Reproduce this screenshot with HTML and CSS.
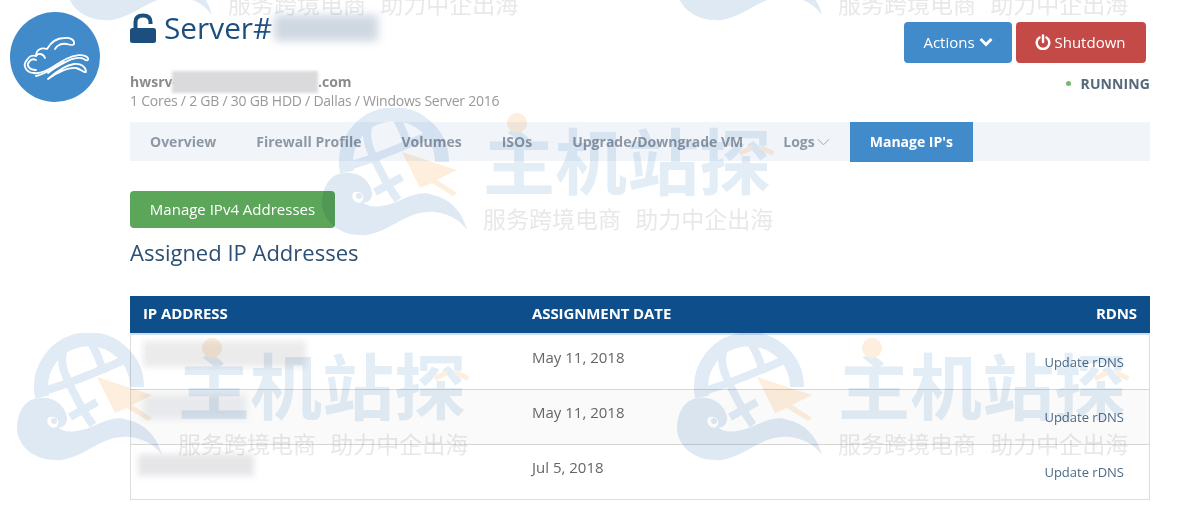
FILE: index.html
```html
<!DOCTYPE html>
<html lang="en">
<head>
<meta charset="utf-8">
<title>Server</title>
<link rel="stylesheet" href="styles.css">
</head>
<body>
<svg class="defs" width="0" height="0" aria-hidden="true">
  <symbol id="wm-mark" viewBox="0 0 160 130">
    <path fill="none" stroke="#e0ebf5" stroke-width="14" d="M27 64 A48 48 0 1 1 122 54"/>
    <g fill="none" stroke="#e0ebf5" stroke-width="8">
      <path d="M50 14 C42 30 52 46 60 62 C66 74 72 84 78 92"/>
      <path d="M76 10 C82 20 86 30 88 40"/>
      <path d="M28 58 C52 52 80 40 116 24"/>
      <path d="M55 84 L82 69"/>
    </g>
    <path fill="#dfe9f4" d="M2 94 C3 76 12 65 25 65 C38 63 50 72 52 84 C53 92 46 96 43 94 C48 100 62 101 83 91 C96 85 106 84 113 87 C128 90 142 102 147 122 C138 110 128 106 115 104 C96 102 82 112 67 120 C54 126 46 128 40 127 C20 127 2 114 2 94 Z"/>
    <path fill="#fff" d="M33 85 C37 82 45 85 43 91 C42 96 36 96 33 91 C32 89 32 87 33 85 Z"/>
    <circle cx="39" cy="88" r="3" fill="#dfe9f4"/>
    <path fill="#fdeedd" d="M82 44 L137 62 L117 72 L137 85 L133 88 L112 75 L100 80 Z"/>
  </symbol>
</svg>

<div class="wm wm-tl"><svg class="wm-svg"><use href="#wm-mark"/></svg><div class="wm-copy"><i class="wm-dot"></i><div class="wm-big">主机站探</div><div class="wm-sub">服务跨境电商 助力中企出海</div></div></div>
<div class="wm wm-tr"><svg class="wm-svg"><use href="#wm-mark"/></svg><div class="wm-copy"><i class="wm-dot"></i><div class="wm-big">主机站探</div><div class="wm-sub">服务跨境电商 助力中企出海</div></div></div>
<div class="wm wm-c"><svg class="wm-svg"><use href="#wm-mark"/></svg><div class="wm-copy"><i class="wm-dot"></i><div class="wm-big">主机站探</div><div class="wm-sub">服务跨境电商 助力中企出海</div></div></div>
<div class="wm wm-bl"><svg class="wm-svg"><use href="#wm-mark"/></svg><div class="wm-copy"><i class="wm-dot"></i><div class="wm-big">主机站探</div><div class="wm-sub">服务跨境电商 助力中企出海</div></div></div>
<div class="wm wm-br"><svg class="wm-svg"><use href="#wm-mark"/></svg><div class="wm-copy"><i class="wm-dot"></i><div class="wm-big">主机站探</div><div class="wm-sub">服务跨境电商 助力中企出海</div></div></div>

<div class="page">
  <aside class="side">
    <div class="logo">
      <svg viewBox="0 0 90 90" width="90" height="90" fill="none" stroke="#fff" stroke-width="1.800" stroke-linecap="round" stroke-linejoin="round">
        <path d="M24 61 C16 61 12 53 17 48 C19 44 23 43 26 44 C26 38 31 35 37 37 C41 30 47 26 54 26 C60 25 65 28 64 32 C63 34 60 33 57 32 C52 31 47 33 45 37"/>
        <path d="M26 44 C28 41 33 41 35 46"/>
        <path d="M26 58 C19 58 16 53 19 50 C21 47 24 47 26 48"/>
        <path d="M24 61 C34 63 46 52 56 47 C64 43 74 41 78 46 C79 49 76 49 74 47 C68 44 60 47 52 52 C46 55 42 58 38 61"/>
        <path d="M26 64 C36 62 46 54 54 50"/>
        <path d="M38 67 C46 60 56 53 64 52 C71 51 76 55 76 60 C74 61 71 57 66 56 C58 55 48 60 38 67 Z"/>
      </svg>
    </div>
  </aside>

  <main class="main">
    <header class="head">
      <div class="head-left">
        <h1 class="title">
          <svg class="lock" viewBox="0 0 26 30" width="26" height="30">
            <path fill="none" stroke="#1d4f7e" stroke-width="4" d="M5.500 16 V9 C5.500 4.500 8.500 2.500 13 2.500 C17.500 2.500 20.500 4.500 20.500 9 V11"/>
            <rect x="0" y="15" width="26" height="15" rx="2.500" fill="#1d4f7e"/>
          </svg>
          <span>Server#</span><span class="blur blur-title"></span>
        </h1>
        <div class="host">hwsrv-<span class="blur blur-host"></span>.com</div>
        <div class="specs">1 Cores / 2 GB / 30 GB HDD / Dallas / Windows Server 2016</div>
      </div>
      <div class="head-right">
        <div class="btns">
          <a class="btn btn-blue">Actions
            <svg viewBox="0 0 14 10" width="14" height="10" fill="none" stroke="#fff" stroke-width="2.800"><path d="M1.500 2 L7 7.500 L12.500 2"/></svg>
          </a>
          <a class="btn btn-red">
            <svg viewBox="0 0 16 16" width="16" height="16" fill="none" stroke="#fff" stroke-width="2.400" stroke-linecap="round"><path d="M4.500 3.500 A6.300 6.300 0 1 0 11.500 3.500"/><path d="M8 1.500 V8"/></svg>
            Shutdown
          </a>
        </div>
        <div class="status"><i class="status-dot"></i>RUNNING</div>
      </div>
    </header>

    <nav class="tabs">
      <a class="tab">Overview</a>
      <a class="tab">Firewall Profile</a>
      <a class="tab">Volumes</a>
      <a class="tab">ISOs</a>
      <a class="tab">Upgrade/Downgrade VM</a>
      <a class="tab">Logs
        <svg viewBox="0 0 14 8" width="13" height="8" fill="none" stroke="#9aa4b0" stroke-width="1"><path d="M1 1 L7 7 L13 1"/></svg>
      </a>
      <a class="tab tab-on">Manage IP's</a>
    </nav>

    <a class="btn-green">Manage IPv4 Addresses</a>
    <h2 class="subhead">Assigned IP Addresses</h2>

    <table class="ips">
      <thead>
        <tr><th>IP ADDRESS</th><th>ASSIGNMENT DATE</th><th class="r">RDNS</th></tr>
      </thead>
      <tbody>
        <tr><td><span class="blur blur-a"></span></td><td>May 11, 2018</td><td class="r"><a class="upd">Update rDNS</a></td></tr>
        <tr class="alt"><td><span class="blur blur-b"></span></td><td>May 11, 2018</td><td class="r"><a class="upd">Update rDNS</a></td></tr>
        <tr><td><span class="blur blur-c"></span></td><td>Jul 5, 2018</td><td class="r"><a class="upd">Update rDNS</a></td></tr>
      </tbody>
    </table>
  </main>
</div>
</body>
</html>
```

FILE: styles.css
```css
* { box-sizing: border-box; }
html, body { margin: 0; height: 508px; overflow: hidden; background: #fff; }
body { font-family: "Open Sans", "Liberation Sans", sans-serif; color: #666; position: relative; }
.defs { position: absolute; }

.page { display: flex; padding-right: 29px; }
.side { width: 130px; flex: none; padding: 12px 0 0 10px; }
.logo { width: 90px; height: 90px; border-radius: 50%; background: #428bca; }
.logo svg { display: block; }
.main { flex: 1; min-width: 0; }

.head { display: flex; justify-content: space-between; height: 122px; }
.head-left { padding-top: 8px; }
.title { display: flex; align-items: center; margin: 0; height: 40px; font-size: 29.800px; font-weight: 400; color: #1d4f7e; line-height: 40px; }
.lock { margin-right: 8px; flex: none; }
.host { margin-top: 24px; font-size: 14px; font-weight: 700; line-height: 20px; height: 20px; color: #8b8b8b; display: flex; align-items: center; }
.specs { font-size: 14px; line-height: 20px; color: #999; margin-top: -1px; letter-spacing: -.24px; }

.blur { display: block; background: #d4d6da; filter: blur(3px); }
.blur-title { width: 104px; height: 26px; margin-left: 2px; background: #cfd7e1; filter: blur(5px); }
.blur-host { width: 146px; height: 22px; margin-left: -5px; background: #dadadd; filter: blur(1.500px); }
.blur-a { width: 163px; height: 26px; background: #ebebec; }
.blur-b { width: 103px; height: 24px; margin-top: -1px; background: #e7e9ec; }
.blur-c { width: 116px; height: 22px; background: #e6e6e8; margin: 3px 0 0 -5px; }

.head-right { display: flex; flex-direction: column; align-items: flex-end; padding-top: 22px; }
.btns { display: flex; gap: 4px; margin-right: 4px; }
.btn { display: flex; align-items: center; justify-content: center; height: 41px; padding-bottom: 2px; border-radius: 4px; color: #fff; font-size: 15px; gap: 4px; }
.btn-blue { width: 108px; background: #428bca; }
.btn-red { width: 130px; padding-right: 2px; background: #c44a47; }
.status { display: flex; align-items: center; margin-top: 11px; font-size: 14px; font-weight: 700; line-height: 19px; color: #56687a; letter-spacing: .1px; }
.status-dot { width: 5px; height: 5px; border-radius: 50%; background: #72b972; margin-right: 10px; }

.tabs { display: flex; height: 39px; background: #f1f5fa; }
.tab { display: flex; align-items: center; gap: 2px; height: 39px; padding: 0 20px; font-size: 14px; font-weight: 700; color: #8e98a5; white-space: nowrap; }
.tab-on { height: 40px; padding-bottom: 1px; background: #428bca; color: #fff; }

.btn-green { display: flex; align-items: center; justify-content: center; width: 205px; height: 37px; margin-top: 30px; padding-bottom: 2px; border-radius: 4px; background: #5ca65a; color: #fff; font-size: 15px; }
.subhead { margin: 8px 0 0; font-size: 22px; font-weight: 400; line-height: 32px; color: #2c4f72; }

.ips { width: 100%; margin-top: 28px; border-collapse: separate; border-spacing: 0; table-layout: fixed; }
.ips th { height: 37px; padding: 0 13px 3px 12px; background: #0d4e8b; color: #fff; font-size: 15px; font-weight: 700; text-align: left; letter-spacing: -.1px; }
.ips th:first-child { width: 390px; padding-left: 13px; }
.ips td { height: 55px; padding: 12px 12px 0; font-size: 15px; line-height: 20px; color: #666; border-bottom: 1px solid #d6d6d6; vertical-align: top; }
.ips tbody tr:first-child td { height: 57px; border-top: 2px solid #cfdfee; }
.ips td:first-child { padding-top: 6px; border-left: 1px solid #ddd; }
.ips td:last-child { border-right: 1px solid #ddd; }
.ips tbody tr:last-child td { border-bottom-color: #ddd; }
.ips .r { text-align: right; }
.ips td.r { padding: 18px 25px 0 0; }
.alt td { background: #fafafa; }
.upd { display: block; font-size: 13px; line-height: 18px; color: #4c6b85; }

.wm { position: absolute; display: flex; width: 455px; height: 130px; mix-blend-mode: multiply; pointer-events: none; z-index: 5; }
.wm-tl { left: 65px; top: -107px; }
.wm-tr { left: 675px; top: -107px; }
.wm-c { left: 320px; top: 108px; }
.wm-bl { left: 15px; top: 333px; }
.wm-br { left: 675px; top: 333px; }
.wm-svg { width: 160px; height: 130px; flex: none; }
.wm-copy { position: relative; margin-left: 3px; width: 290px; font-family: "Noto Sans CJK SC", sans-serif; }
.wm-copy::before, .wm-copy::after { content: ""; position: absolute; top: 40px; width: 14px; height: 5px; background: #fdeedd; }
.wm-copy::before { left: 256px; transform: rotate(-25deg); }
.wm-copy::after { left: 277px; transform: rotate(25deg); }
.wm-dot { position: absolute; left: 24px; top: 5px; width: 20px; height: 20px; border-radius: 50%; background: #fdeedd; }
.wm-big { margin-top: 8px; font-size: 72px; line-height: 84px; font-weight: 700; color: #e3edf6; white-space: nowrap; }
.wm-sub { margin-top: 4px; font-size: 23px; line-height: 28px; color: #e8e8e8; white-space: pre; word-spacing: 9px; }
```
